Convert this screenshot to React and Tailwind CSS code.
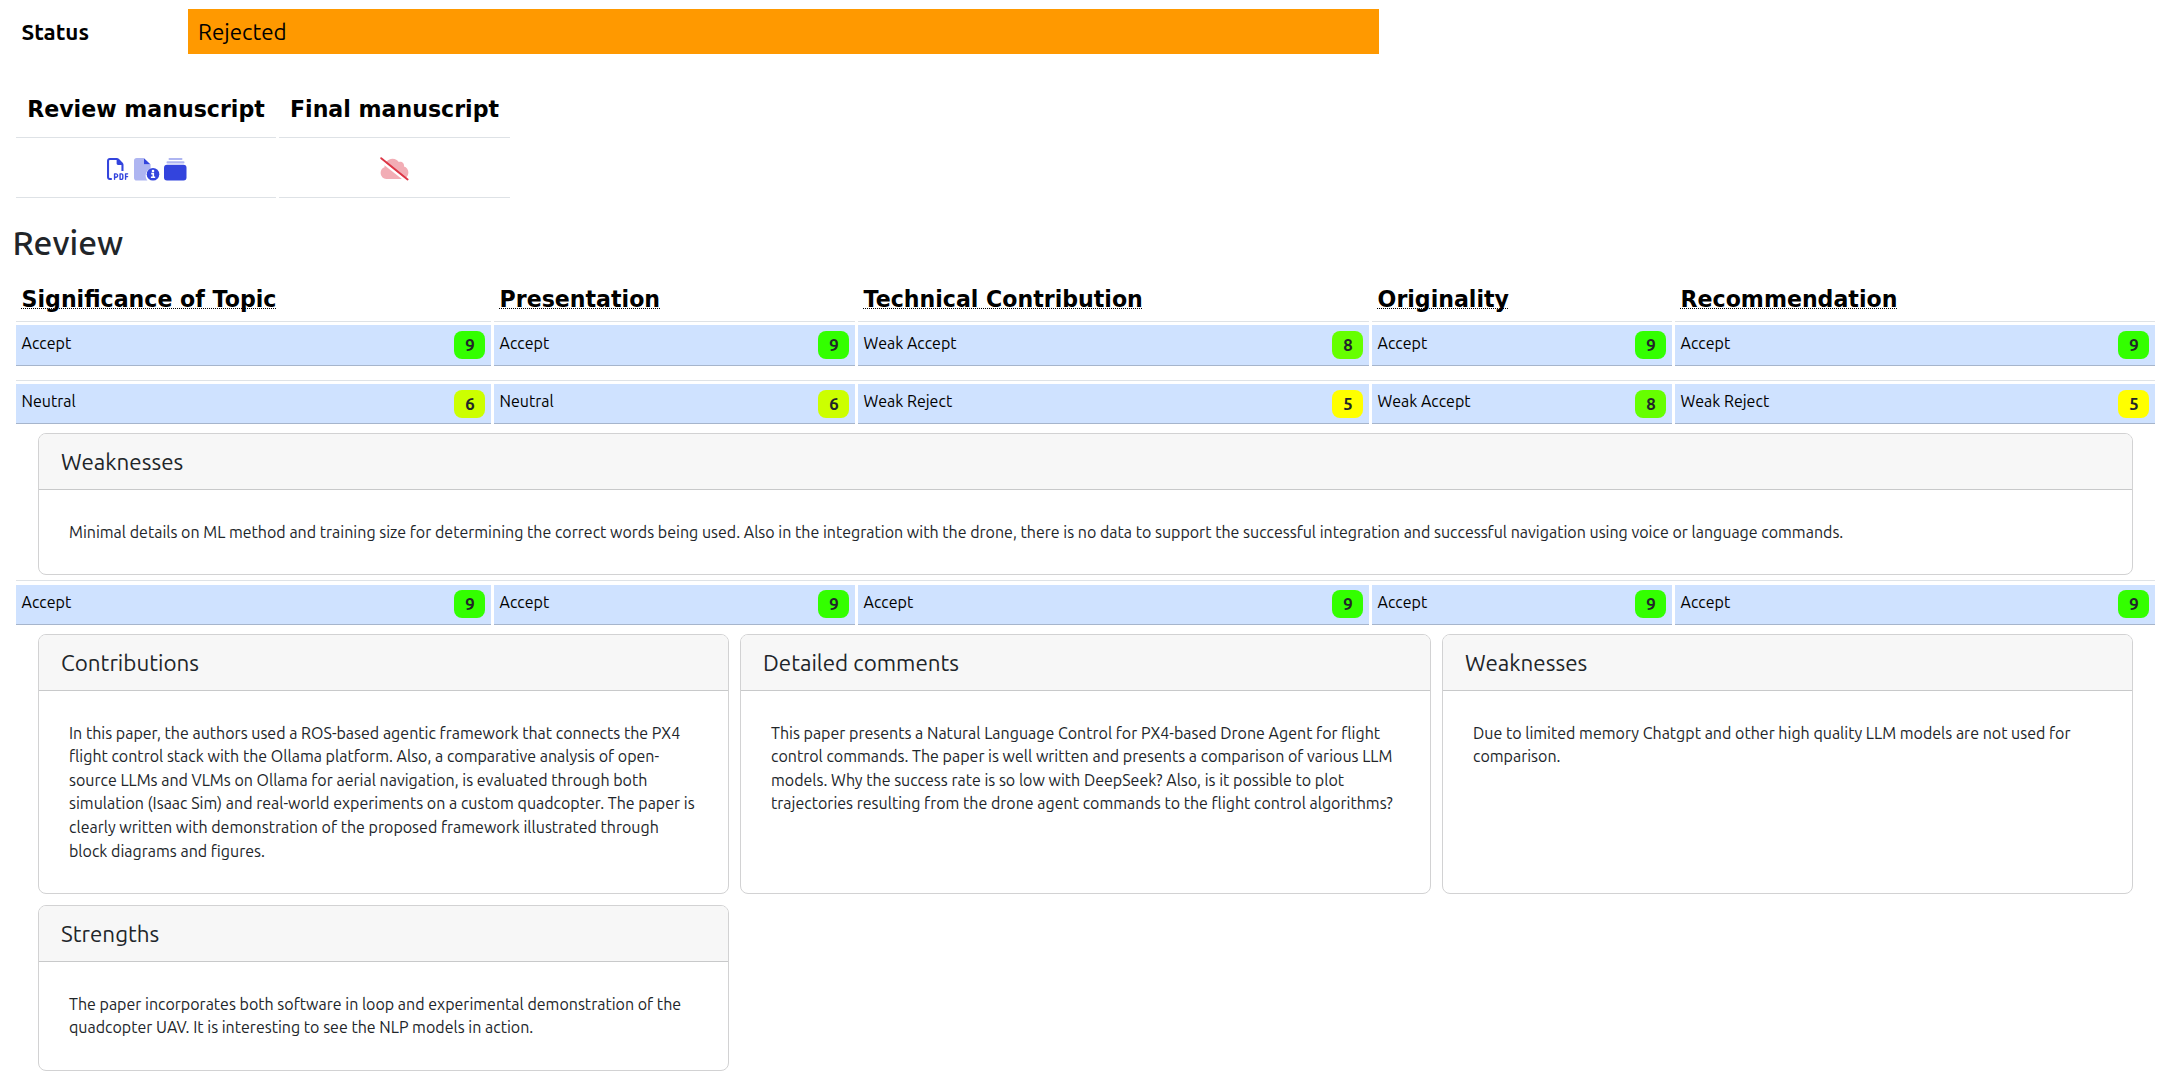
import { FaRegFilePdf } from "react-icons/fa6";

const COLUMNS = [
  "Significance of Topic",
  "Presentation",
  "Technical Contribution",
  "Originality",
  "Recommendation",
];

const GRID = "grid grid-cols-[475px_361px_511px_300px_480px] gap-x-[3px]";

const SCORE_COLORS = {
  5: "bg-[#ffff00]",
  6: "bg-[#ccff00]",
  8: "bg-[#66ff00]",
  9: "bg-[#33ff00]",
};

function FileInfoIcon() {
  return (
    <svg className="h-[23px] w-[26px]" viewBox="0 0 26 23">
      <path d="M2.8 0H10v6.3h6.6v4.2a7.6 7.6 0 0 0-3.2 12H2.8A2.8 2.8 0 0 1 0 19.700V2.800A2.800 2.800 0 0 1 2.800 0Z" fill="#aeb5f1" />
      <path d="M10 0.300 16.400 6.300H10Z" fill="#3344dd" />
      <circle cx="19" cy="16.200" r="6.300" fill="#3344dd" />
      <circle cx="19" cy="13" r="1.300" fill="#fff" />
      <path d="M17.200 15.600H19.300V19M16.900 19.300H21.200" stroke="#fff" strokeWidth="1.600" fill="none" />
    </svg>
  );
}

function StackIcon() {
  return (
    <svg className="h-[23px] w-[23px]" viewBox="0 0 23 23">
      <g fill="#aeb5f1">
        <rect x="4.500" y="0" width="14" height="2.100" rx="1" />
        <rect x="2.500" y="3.300" width="18" height="2.100" rx="1" />
      </g>
      <rect x="0" y="6.800" width="22.500" height="15.800" rx="3" fill="#3344dd" />
    </svg>
  );
}

function CloudSlashIcon() {
  return (
    <svg className="h-[24px] w-[29px]" viewBox="0 0 29 24">
      <path
        d="M6.300 22A6 6 0 0 1 .600 16C.600 13 2.200 11.200 4.500 10.300C4.500 5.500 8 1.700 12.500 1.700C15.500 1.700 17.500 3 18.800 5C21.500 4 24.500 6 24 9.500C26.700 10.200 28.400 12.700 28.400 15.300C28.400 19 26 22 22.500 22Z"
        fill="#f2adb5"
      />
      <path d="M-.200 3 27 24.500" stroke="#fff" strokeWidth="2.400" />
      <path d="M1.200 1.200 27.600 22.400" stroke="#dc3545" strokeWidth="1.900" strokeLinecap="round" />
    </svg>
  );
}

function ScoreRow({ scores, height, textPad, badgePad }) {
  return (
    <div className={GRID}>
      {scores.map(([label, score], i) => (
        <div
          key={i}
          className={`flex items-start justify-between border-b border-[#a6b5cc] bg-[#cfe2ff] px-[5.6px] text-base leading-6 text-black ${height}`}
        >
          <span className={textPad}>{label}</span>
          <div className={badgePad}>
            <span className={`flex h-7 w-[31px] items-center justify-center rounded-lg text-[16.8px] font-bold text-[#212529] ${SCORE_COLORS[score]}`}>
              {score}
            </span>
          </div>
        </div>
      ))}
    </div>
  );
}

function Card({ title, children }) {
  return (
    <section className="overflow-hidden rounded-lg border border-[#d2d2d3] bg-white">
      <h3 className="flex h-14 items-center border-b border-[#c8c9ca] bg-[#f7f7f7] pt-px pl-[22px] text-[22.4px] leading-none">
        {title}
      </h3>
      <p className="pt-[30.6px] pr-8 pl-[30px] text-base leading-[23.6px]">{children}</p>
    </section>
  );
}

function Separator({ className }) {
  return <div className={`h-px bg-[#dee2e6] ${className}`} />;
}

export default function App() {
  return (
    <main className="h-[1075px] w-[2161px] overflow-hidden bg-white pt-[9px] font-['Ubuntu','Noto_Sans',sans-serif] text-[#212529]">
      <div className="flex h-[45px] items-center pl-[21.5px] text-[22.4px] leading-none text-black">
        <div className="w-[166.5px] pt-0.5 font-bold">Status</div>
        <div className="flex h-full w-[1191px] items-center bg-[#ff9900] pt-0.5 pl-2.5">Rejected</div>
      </div>

      <div className="mt-7 ml-4 grid w-[494px] grid-cols-[260px_231px] gap-x-[3px] text-black">
        {["Review manuscript", "Final manuscript"].map((title) => (
          <div
            key={title}
            className="flex h-14 items-center justify-center border-b border-[#dee2e6] font-['DejaVu_Sans'] text-[22.1px] leading-none font-bold whitespace-nowrap"
          >
            {title}
          </div>
        ))}
        <div className="flex h-[60px] items-start justify-center gap-1 border-b border-[#dee2e6] pt-5 pl-px">
          <FaRegFilePdf className="mr-px size-[22px] text-[#3344dd]" />
          <FileInfoIcon />
          <StackIcon />
        </div>
        <div className="flex h-[60px] items-start justify-center border-b border-[#dee2e6] pt-[19px]">
          <CloudSlashIcon />
        </div>
      </div>

      <h2 className="mt-[27px] ml-[12.5px] h-9 text-[33.6px] leading-9 font-[550]">Review</h2>

      <div className="ml-4 w-[2139px]">
        <div className={`mt-[17px] h-[44px] ${GRID}`}>
          {COLUMNS.map((title) => (
            <div key={title} className="h-[44px] border-b border-[#dee2e6] pt-1.5 pl-[5.6px] font-['DejaVu_Sans'] text-[22.1px] leading-[30px] font-bold text-black">
              <span className="underline decoration-dotted decoration-1 underline-offset-1 [text-decoration-skip-ink:none]">{title}</span>
            </div>
          ))}
        </div>
        <div className="pt-[3px]">
          <ScoreRow
            height="h-[41px]"
            textPad="pt-1.5"
            badgePad="pt-1.5"
            scores={[["Accept", 9], ["Accept", 9], ["Weak Accept", 8], ["Accept", 9], ["Accept", 9]]}
          />
        </div>

        <Separator className="mt-3.5 mb-[3px]" />
        <ScoreRow
          height="h-10"
          textPad="pt-[5px]"
          badgePad="pt-1.5"
          scores={[["Neutral", 6], ["Neutral", 6], ["Weak Reject", 5], ["Weak Accept", 8], ["Weak Reject", 5]]}
        />
        <div className="mt-[9px] ml-[22px] grid h-[142px] w-[2095px]">
          <Card title="Weaknesses">
            Minimal details on ML method and training size for determining the correct words being used. Also in the
            integration with the drone, there is no data to support the successful integration and successful navigation
            using voice or language commands.
          </Card>
        </div>

        <Separator className="mt-[5px] mb-1" />
        <ScoreRow
          height="h-10"
          textPad="pt-[5px]"
          badgePad="pt-[5px]"
          scores={[["Accept", 9], ["Accept", 9], ["Accept", 9], ["Accept", 9], ["Accept", 9]]}
        />
        <div className="mt-[9px] ml-[22px] grid w-[2095px] grid-cols-3 grid-rows-[260px_166px] gap-[11px]">
          <Card title="Contributions">
            In this paper, the authors used a ROS-based agentic framework that connects the PX4 flight control stack with
            the Ollama platform. Also, a comparative analysis of open-source LLMs and VLMs on Ollama for aerial
            navigation, is evaluated through both simulation (Isaac Sim) and real-world experiments on a custom
            quadcopter. The paper is clearly written with demonstration of the proposed framework illustrated through
            block diagrams and figures.
          </Card>
          <Card title="Detailed comments">
            This paper presents a Natural Language Control for PX4-based Drone Agent for flight control commands. The
            paper is well written and presents a comparison of various LLM models. Why the success rate is so low with
            DeepSeek? Also, is it possible to plot trajectories resulting from the drone agent commands to the flight
            control algorithms?
          </Card>
          <Card title="Weaknesses">
            Due to limited memory Chatgpt and other high quality LLM models are not used for comparison.
          </Card>
          <Card title="Strengths">
            The paper incorporates both software in loop and experimental demonstration of the quadcopter UAV. It is
            interesting to see the NLP models in action.
          </Card>
        </div>
      </div>
    </main>
  );
}
